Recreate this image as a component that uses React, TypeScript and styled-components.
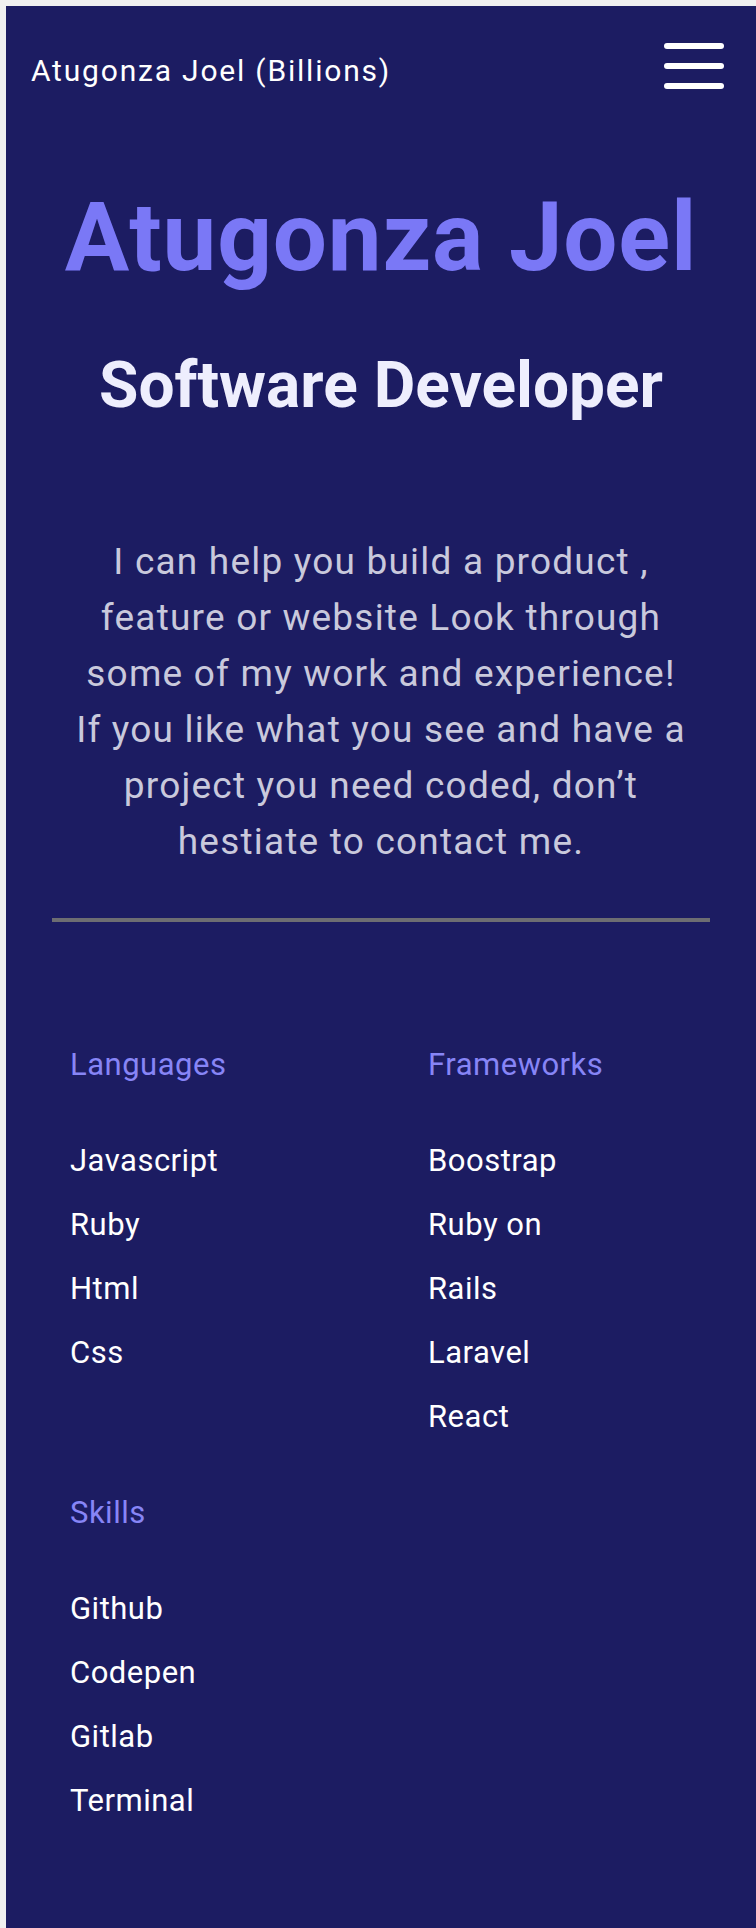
import React from "react";
import styled, { createGlobalStyle } from "styled-components";

const GlobalStyle = createGlobalStyle`
  html, body {
    background: #f0f0f0;
  }
  body {
    margin: 6px 0 0 6px;
    overflow-x: hidden;
    font-family: Roboto, "Liberation Sans", Arial, sans-serif;
  }
  * { box-sizing: border-box; }
`;

const Panel = styled.div`
  background: #1c1c62;
  min-height: calc(100vh - 6px);
  width: 750px;
  padding-bottom: 110px;
`;

const Header = styled.header`
  display: flex;
  justify-content: space-between;
  align-items: flex-start;
  padding: 37px 32px 0 25px;
`;

const Brand = styled.div`
  color: #ffffff;
  font-size: 30px;
  line-height: 35px;
  letter-spacing: 1.8px;
  margin-top: 10px;
`;

const MenuButton = styled.button`
  display: flex;
  flex-direction: column;
  gap: 14px;
  padding: 0;
  border: 0;
  background: transparent;
  cursor: pointer;
`;

const Bar = styled.span`
  display: block;
  width: 60px;
  height: 6px;
  border-radius: 3px;
  background: #ffffff;
`;

const Hero = styled.section`
  display: flex;
  flex-direction: column;
  align-items: center;
  text-align: center;
`;

const Title = styled.h1`
  margin: 92px 0 0;
  font-size: 96px;
  line-height: 112px;
  font-weight: 700;
  letter-spacing: 0.8px;
  color: #7a78f6;
`;

const Subtitle = styled.h2`
  margin: 55px 0 0;
  font-size: 64px;
  line-height: 75px;
  font-weight: 700;
  color: #eeeefd;
`;

const Intro = styled.p`
  margin: 111px 0 0;
  max-width: 612px;
  font-size: 37px;
  line-height: 56px;
  letter-spacing: 1.2px;
  color: #c9c9dc;
`;

const Divider = styled.hr`
  margin: 48px 0 0;
  width: 658px;
  height: 4px;
  border: 0;
  background: #6d6d72;
`;

const SkillGrid = styled.section`
  display: grid;
  grid-template-columns: 358px auto;
  row-gap: 60px;
  padding-left: 64px;
  margin-top: 125px;
`;

const Group = styled.div`
  display: flex;
  flex-direction: column;
`;

const GroupTitle = styled.h3`
  margin: 0;
  font-size: 31px;
  line-height: 36px;
  font-weight: 400;
  letter-spacing: 0.5px;
  color: #8785f6;
`;

const ItemList = styled.ul`
  list-style: none;
  margin: 60px 0 0;
  padding: 0;
  display: flex;
  flex-direction: column;
  gap: 28px;
`;

const Item = styled.li`
  font-size: 31px;
  line-height: 36px;
  letter-spacing: 0.5px;
  color: #ffffff;
`;

const groups: { title: string; items: string[] }[] = [
  { title: "Languages", items: ["Javascript", "Ruby", "Html", "Css"] },
  { title: "Frameworks", items: ["Boostrap", "Ruby on", "Rails", "Laravel", "React"] },
  { title: "Skills", items: ["Github", "Codepen", "Gitlab", "Terminal"] },
];

export default function App() {
  return (
    <>
      <GlobalStyle />
      <Panel>
        <Header>
          <Brand>Atugonza Joel (Billions)</Brand>
          <MenuButton aria-label="Menu">
            <Bar />
            <Bar />
            <Bar />
          </MenuButton>
        </Header>
        <Hero>
          <Title>Atugonza Joel</Title>
          <Subtitle>Software Developer</Subtitle>
          <Intro>
            I can help you build a product , feature or website Look through some of my work
            and experience! If you like what you see and have a project you need coded, don’t
            hestiate to contact me.
          </Intro>
          <Divider />
        </Hero>
        <SkillGrid>
          {groups.map((g) => (
            <Group key={g.title}>
              <GroupTitle>{g.title}</GroupTitle>
              <ItemList>
                {g.items.map((it) => (
                  <Item key={it}>{it}</Item>
                ))}
              </ItemList>
            </Group>
          ))}
        </SkillGrid>
      </Panel>
    </>
  );
}
